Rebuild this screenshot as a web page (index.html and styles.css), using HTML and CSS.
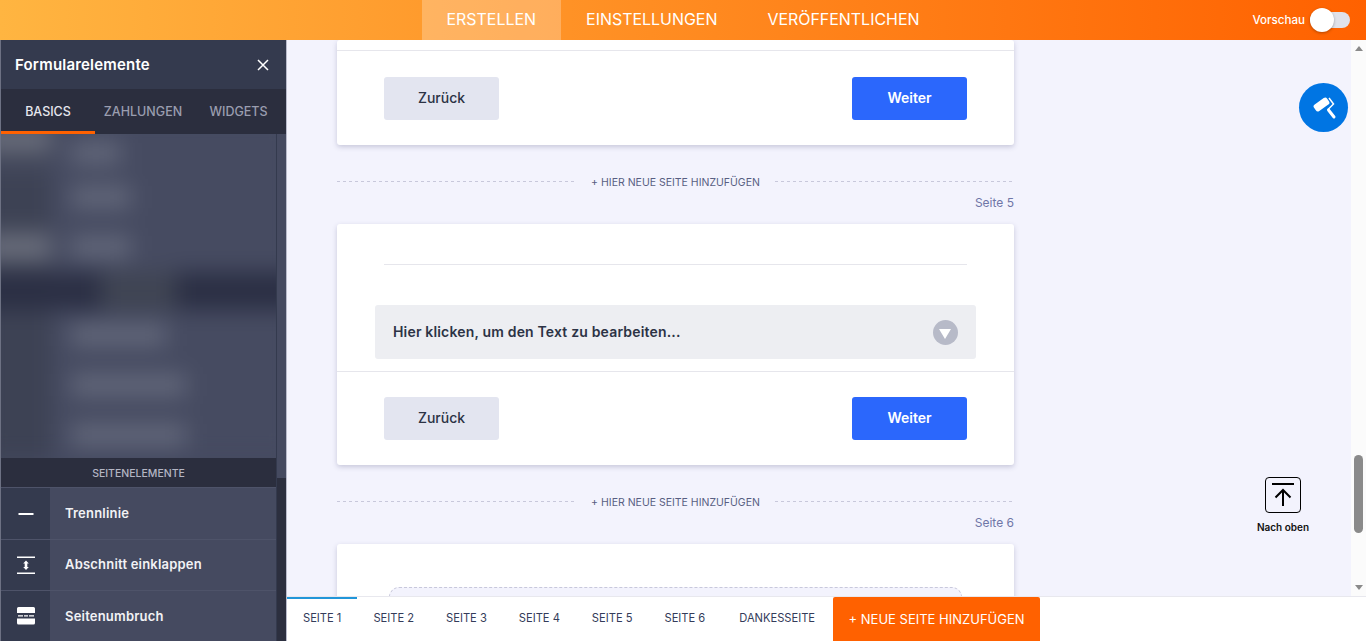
FILE: index.html
```html
<!DOCTYPE html>
<html lang="de">
  <head>
    <meta charset="UTF-8" />
    <meta name="viewport" content="width=device-width, initial-scale=1.0" />
    <title>Formular erstellen</title>
    <link rel="stylesheet" href="styles.css">
  </head>
  <body>
    <div class="app">
      <header class="topbar">
        <nav class="topnav">
          <a class="topnav-item active">ERSTELLEN</a>
          <a class="topnav-item">EINSTELLUNGEN</a>
          <a class="topnav-item">VERÖFFENTLICHEN</a>
        </nav>
        <div class="preview">
          <span>Vorschau</span>
          <span class="toggle"><span class="toggle-knob"></span></span>
        </div>
      </header>

      <div class="workspace">
        <aside class="sidebar">
          <div class="sidebar-head">
            <span>Formularelemente</span>
            <svg class="close" width="12" height="12" viewBox="0 0 12 12"><path d="M1 1l10 10M11 1L1 11" stroke="#fff" stroke-width="1.5" fill="none"/></svg>
          </div>
          <div class="tabs">
            <span class="tab active">BASICS</span>
            <span class="tab">ZAHLUNGEN</span>
            <span class="tab">WIDGETS</span>
          </div>
          <div class="sidebar-body">
            <div class="sidebar-list">
              <div class="blur-box">
                <div class="blur-list">
                  <div class="blur-row first"><i class="blur-icon light"></i><i class="blur-label w50"></i></div>
                  <div class="blur-row"><i class="blur-icon"></i><i class="blur-label w60"></i></div>
                  <div class="blur-row"><i class="blur-icon light"></i><i class="blur-label w60"></i></div>
                  <div class="blur-band"><i class="band-part"></i><i class="band-part"></i></div>
                  <div class="blur-row"><i class="blur-icon"></i><i class="blur-label w95"></i></div>
                  <div class="blur-row"><i class="blur-icon"></i><i class="blur-label w115"></i></div>
                  <div class="blur-row"><i class="blur-icon"></i><i class="blur-label w115"></i></div>
                </div>
              </div>
              <div class="section-title">SEITENELEMENTE</div>
              <div class="element">
                <span class="element-icon">
                  <svg width="18" height="18" viewBox="0 0 18 18"><rect x="1.500" y="8" width="15" height="2" fill="#fff"/></svg>
                </span>
                <span class="element-name">Trennlinie</span>
              </div>
              <div class="element">
                <span class="element-icon">
                  <svg width="18" height="18" viewBox="0 0 18 18"><path d="M0 .5h18V2H0zM0 16.500h18V18H0z" fill="#fff"/><path d="M9 4.500l2.800 3H10.300v3.500h1.500L9 14l-2.800-3h1.500V7.500H6.200z" fill="#fff"/></svg>
                </span>
                <span class="element-name">Abschnitt einklappen</span>
              </div>
              <div class="element">
                <span class="element-icon">
                  <svg width="18" height="18" viewBox="0 0 18 18"><path d="M1.500 0h15A1.500 1.500 0 0 1 18 1.500V6H0V1.500A1.500 1.500 0 0 1 1.500 0zM0 11.500h18V16a1.500 1.500 0 0 1-1.500 1.500h-15A1.500 1.500 0 0 1 0 16z" fill="#fff"/><path d="M1 8.200h5v1.200H1zM7 8.200h4v1.200H7zM12 8.200h5v1.200h-5z" fill="#fff"/></svg>
                </span>
                <span class="element-name">Seitenumbruch</span>
              </div>
            </div>
            <div class="sidebar-scroll"></div>
          </div>
        </aside>

        <main class="main">
          <div class="stage">
            <div class="canvas">
              <section class="card">
                <div class="card-cut"></div>
                <div class="card-foot">
                  <button class="btn btn-back">Zurück</button>
                  <button class="btn btn-next">Weiter</button>
                </div>
              </section>

              <div class="add-page"><span>+ HIER NEUE SEITE HINZUFÜGEN</span></div>
              <div class="page-label">Seite 5</div>

              <section class="card">
                <div class="card-body">
                  <div class="rule"></div>
                  <div class="collapse">
                    <span class="collapse-text">Hier klicken, um den Text zu bearbeiten...</span>
                    <span class="collapse-arrow"></span>
                  </div>
                </div>
                <div class="card-foot">
                  <button class="btn btn-back">Zurück</button>
                  <button class="btn btn-next">Weiter</button>
                </div>
              </section>

              <div class="add-page"><span>+ HIER NEUE SEITE HINZUFÜGEN</span></div>
              <div class="page-label">Seite 6</div>

              <section class="card card-last">
                <div class="dropzone"></div>
              </section>
            </div>

            <div class="scrollbar">
              <span class="arrow-up"></span>
              <span class="thumb"></span>
              <span class="arrow-down"></span>
            </div>

            <button class="paint">
              <svg width="26" height="26" viewBox="0 0 26 26">
                <rect x="2.500" y="5.500" width="16" height="8" rx="2.500" transform="rotate(-35 10.500 9.500)" fill="#fff"/>
                <path d="M18 3l4.500 6-5.500 5.500" fill="none" stroke="#fff" stroke-width="1.500"/>
                <path d="M17.500 15l5.500 7" stroke="#fff" stroke-width="3" stroke-linecap="round"/>
              </svg>
            </button>

            <div class="to-top">
              <span class="to-top-box">
                <svg width="24" height="24" viewBox="0 0 24 24"><path d="M1 1h22" stroke="#000" stroke-width="2"/><path d="M12 23V7M4.500 14.500L12 7l7.500 7.500" fill="none" stroke="#000" stroke-width="2"/></svg>
              </span>
              <span class="to-top-text">Nach oben</span>
            </div>
          </div>

          <footer class="pagebar">
            <span class="page-tab active">SEITE 1</span>
            <span class="page-tab">SEITE 2</span>
            <span class="page-tab">SEITE 3</span>
            <span class="page-tab">SEITE 4</span>
            <span class="page-tab">SEITE 5</span>
            <span class="page-tab">SEITE 6</span>
            <span class="page-tab thanks">DANKESSEITE</span>
            <button class="new-page">+ NEUE SEITE HINZUFÜGEN</button>
          </footer>
        </main>
      </div>
    </div>
  </body>
</html>
```

FILE: styles.css
```css
html,
body {
  margin: 0;
  padding: 0;
  height: 100%;
  overflow: hidden;
}

body {
  font-family: Inter, "Liberation Sans", sans-serif;
  color: #2c3345;
}

.app {
  display: flex;
  flex-direction: column;
  height: 100vh;
}

/* top bar */
.topbar {
  flex: 0 0 40px;
  display: grid;
  grid-template-columns: 1fr auto 1fr;
  background: linear-gradient(90deg, #ffb541 0%, #ff6100 100%);
}

.topnav {
  grid-column: 2;
  display: flex;
}

.topnav-item {
  padding: 0 25px;
  line-height: 40px;
  font-size: 15.950px;
  color: #fff;
}

.topnav-item.active {
  background: rgba(255, 255, 255, 0.25);
}

.preview {
  grid-column: 3;
  display: flex;
  align-items: center;
  justify-content: flex-end;
  padding-right: 16px;
  font-size: 11.600px;
  font-weight: 500;
  color: #fff;
}

.toggle {
  position: relative;
  width: 40px;
  height: 16px;
  margin-left: 5px;
  border-radius: 8px;
  background: #e0e2ea;
}

.toggle-knob {
  position: absolute;
  left: 0;
  top: -4px;
  width: 24px;
  height: 24px;
  border-radius: 50%;
  background: #fff;
  box-shadow: 0 1px 3px rgba(0, 0, 0, 0.3);
}

/* sidebar */
.workspace {
  flex: 1;
  display: flex;
  min-height: 0;
}

.sidebar {
  flex: 0 0 287px;
  display: flex;
  flex-direction: column;
  box-sizing: border-box;
  border-left: 1px solid #6d7183;
  border-right: 1px solid #b9bbcb;
  background: #454a60;
}

.sidebar-head {
  flex: 0 0 49px;
  display: flex;
  align-items: center;
  justify-content: space-between;
  padding: 0 17px 0 14px;
  background: #343a4e;
  font-size: 15px;
  font-weight: 600;
  letter-spacing: 0.2px;
  color: #fff;
}

.tabs {
  flex: 0 0 45px;
  display: flex;
  background: #2b2e3e;
}

.tab {
  box-sizing: border-box;
  height: 45px;
  padding-top: 15px;
  text-align: center;
  font-size: 12.500px;
  font-weight: 500;
  color: #9a9daf;
}

.tab:nth-child(1) {
  width: 94px;
  color: #e6e7ee;
  border-bottom: 3px solid #ff6100;
}

.tab:nth-child(2) {
  width: 96px;
}

.tab:nth-child(3) {
  width: 95px;
}

.sidebar-body {
  flex: 1;
  display: flex;
  min-height: 0;
}

.sidebar-list {
  flex: 0 0 275px;
  border-right: 1px solid #343a4e;
}

.sidebar-scroll {
  flex: 1;
  background: linear-gradient(#454a60 344px, #2c2f3f 344px);
}

/* the block list is still loading in the screenshot, blurred out */
.blur-box {
  height: 324px;
  overflow: hidden;
  background: #454a60;
}

.blur-list {
  filter: blur(11px);
  margin: -20px -20px 0;
}

.blur-row {
  display: flex;
  align-items: center;
  gap: 20px;
  height: 50px;
  background: #464b61;
}

.blur-row.first {
  height: 58px;
  align-items: flex-end;
  padding-bottom: 8px;
  box-sizing: border-box;
}

.blur-icon {
  flex: 0 0 70px;
  height: 100%;
  background: #3d4254;
}

.blur-icon.light {
  background: linear-gradient(#3d4254 10%, #6a6e7c 35%, #6a6e7c 65%, #3d4254 90%);
}

.blur-label {
  height: 22px;
  background: #62677a;
}

.w50 {
  width: 50px;
}

.w60 {
  width: 60px;
}

.w95 {
  width: 95px;
}

.w115 {
  width: 115px;
}

.blur-band {
  display: flex;
  justify-content: space-between;
  height: 38px;
  background: #3f4453;
}

.band-part {
  width: 120px;
  background: #2b2f44;
}

.section-title {
  height: 29px;
  line-height: 31px;
  text-align: center;
  font-size: 10.500px;
  font-weight: 500;
  color: #b4b6c4;
  background: #2b2e3e;
  border-bottom: 1px solid #4e5369;
}

.element {
  display: flex;
  align-items: center;
  height: 50px;
  border-bottom: 1px solid #4e5369;
  font-size: 13px;
  font-weight: 600;
  letter-spacing: 0.2px;
  color: #f2f2f5;
}

.element:nth-child(3) {
  height: 51px;
}

.element:not(:last-child) .element-name {
  padding-bottom: 2px;
}

.element-icon {
  flex: 0 0 49px;
  align-self: stretch;
  display: flex;
  align-items: center;
  justify-content: center;
  margin-right: 15px;
  background: #343a4e;
}

/* main area */
.main {
  flex: 1;
  min-width: 0;
  display: flex;
  flex-direction: column;
}

.stage {
  position: relative;
  flex: 1;
  display: flex;
  min-height: 0;
}

.canvas {
  flex: 1;
  overflow: hidden;
  padding-left: 50px;
  background: #f3f3fd;
}

.card {
  width: 677px;
  background: #fff;
  border-radius: 3px;
  box-shadow: 0 2px 5px rgba(70, 70, 120, 0.25);
}

.card-cut {
  height: 10px;
  border-bottom: 1px solid #e6e6ec;
}

.card-foot {
  display: flex;
  justify-content: space-between;
  padding: 26px 47px 25px;
}

.card-body {
  padding: 40px 38px 12px;
  border-bottom: 1px solid #e6e6ec;
}

.card-body + .card-foot {
  padding-top: 25px;
}

.card-last {
  height: 200px;
  padding-top: 43px;
}

.btn {
  width: 115px;
  height: 43px;
  padding: 0 0 3px;
  border: 0;
  border-radius: 3px;
  font-family: inherit;
  font-size: 14px;
  font-weight: 500;
}

.btn-back {
  background: #e3e5f0;
  color: #2c3345;
}

.btn-next {
  background: #2b67fc;
  color: #fff;
  font-weight: 600;
}

.add-page {
  display: flex;
  align-items: center;
  justify-content: center;
  width: 677px;
  height: 14px;
  margin-top: 30px;
  font-size: 10.500px;
  color: #585e82;
  background: repeating-linear-gradient(90deg, #c8c8db 0 3px, transparent 3px 6px) 0 6px / 100% 1px no-repeat;
}

.add-page span {
  padding: 0 15px;
  background: #f3f3fd;
}

.page-label {
  width: 677px;
  height: 28px;
  margin: 6px 0 1px;
  text-align: right;
  font-size: 12px;
  color: #6f76a7;
}

.rule {
  height: 1px;
  margin: 0 9px 40px;
  background: #e6e6ec;
}

.collapse {
  display: flex;
  align-items: center;
  justify-content: space-between;
  height: 54px;
  padding: 0 18px;
  border-radius: 3px;
  background: #edeef2;
  font-size: 14px;
  font-weight: 600;
  letter-spacing: 0.17px;
}

.collapse-text {
  padding-bottom: 2px;
}

.collapse-arrow {
  position: relative;
  width: 25px;
  height: 25px;
  border-radius: 50%;
  background: #b7bac8;
}

.collapse-arrow::after {
  content: "";
  position: absolute;
  left: 6px;
  top: 9px;
  border-left: 6.500px solid transparent;
  border-right: 6.500px solid transparent;
  border-top: 10px solid #fff;
}

.dropzone {
  height: 100px;
  margin: 0 52px;
  border: 1px dashed #c8c8db;
  border-radius: 10px;
  background: #f3f3fd;
}

/* scrollbar */
.scrollbar {
  position: relative;
  flex: 0 0 15px;
  display: flex;
  flex-direction: column;
  justify-content: space-between;
  align-items: center;
  padding: 6px 0;
  box-sizing: border-box;
  background: #fbfbfb;
}

.arrow-up {
  border-left: 4px solid transparent;
  border-right: 4px solid transparent;
  border-bottom: 5px solid #8a8a8a;
}

.arrow-down {
  border-left: 4px solid transparent;
  border-right: 4px solid transparent;
  border-top: 5px solid #8a8a8a;
}

.thumb {
  position: absolute;
  left: 3px;
  top: 415px;
  width: 9px;
  height: 78px;
  border-radius: 5px;
  background: #8a8a8a;
}

/* floating tools */
.paint {
  position: absolute;
  right: 18px;
  top: 43px;
  display: flex;
  align-items: center;
  justify-content: center;
  width: 49px;
  height: 49px;
  padding: 0;
  border: 0;
  border-radius: 50%;
  background: #0075e3;
}

.to-top {
  position: absolute;
  left: 963px;
  top: 437px;
  width: 66px;
  display: flex;
  flex-direction: column;
  align-items: center;
  font-size: 10px;
  font-weight: 600;
  color: #111;
}

.to-top-box {
  box-sizing: border-box;
  display: flex;
  align-items: center;
  justify-content: center;
  width: 36px;
  height: 36px;
  margin-bottom: 8px;
  border: 1px solid #000;
  border-radius: 4px;
}

/* page tabs */
.pagebar {
  flex: 0 0 45px;
  box-sizing: border-box;
  display: flex;
  align-items: stretch;
  border-top: 1px solid #e8e8ee;
  background: #fff;
}

.page-tab {
  box-sizing: border-box;
  padding: 14px 16px 0;
  font-size: 11.150px;
  color: #343c5a;
}

.page-tab.active {
  padding-top: 12px;
  border-top: 2px solid #2196d9;
}

.page-tab.thanks {
  padding-left: 18px;
  padding-right: 18px;
}

.new-page {
  width: 207px;
  padding: 0;
  border: 0;
  border-radius: 2px 2px 0 0;
  background: #ff6100;
  font-family: inherit;
  font-size: 13px;
  color: #fff;
}
```
